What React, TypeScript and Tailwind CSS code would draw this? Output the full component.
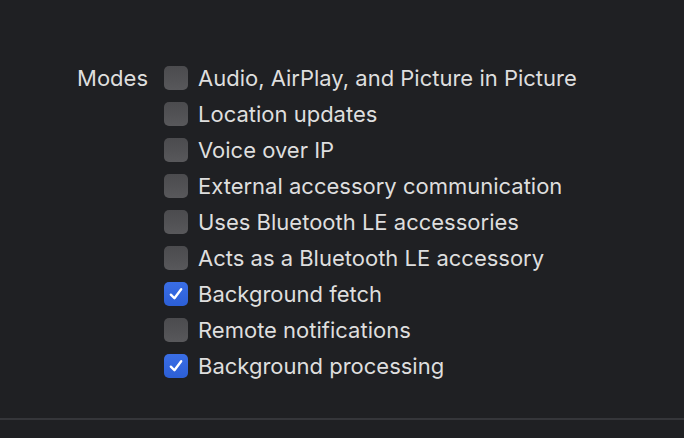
import React from "react";

const items: [string, boolean][] = [
  ["Audio, AirPlay, and Picture in Picture", false],
  ["Location updates", false],
  ["Voice over IP", false],
  ["External accessory communication", false],
  ["Uses Bluetooth LE accessories", false],
  ["Acts as a Bluetooth LE accessory", false],
  ["Background fetch", true],
  ["Remote notifications", false],
  ["Background processing", true],
];

function Box({ checked }: { checked: boolean }) {
  if (checked) {
    return (
      <div className="w-6 h-6 rounded-[5px] bg-gradient-to-b from-[#3a6ee6] to-[#2c5fd6] flex items-center justify-center shrink-0">
        <svg width="18" height="18" viewBox="0 0 16 16" fill="none">
          <path d="M3.4 8.6 L6.6 11.8 L12.6 3.8" stroke="white" strokeWidth="2.1" strokeLinecap="round" strokeLinejoin="round" />
        </svg>
      </div>
    );
  }
  return <div className="w-6 h-6 rounded-[5px] bg-gradient-to-b from-[#4b4b4e] to-[#58585b] shrink-0" />;
}

export default function App() {
  return (
    <div
      className="w-[684px] h-[438px] bg-[#1f2023] flex flex-col text-[#dedede]"
      style={{ fontFamily: "Inter, 'Noto Sans', sans-serif" }}
    >
      <div className="pt-[60px] flex">
        <div className="w-[148px] h-9 flex items-center justify-end text-[22px] leading-none">Modes</div>
        <div className="ml-4 flex flex-col">
          {items.map(([t, c]) => (
            <div key={t} className="h-9 flex items-center gap-[10px]">
              <Box checked={c} />
              <span className="text-[22px] leading-none">{t}</span>
            </div>
          ))}
        </div>
      </div>
      <div className="flex-1" />
      <div className="h-[2px] bg-[#35363a]" />
      <div className="h-[18px]" />
    </div>
  );
}
